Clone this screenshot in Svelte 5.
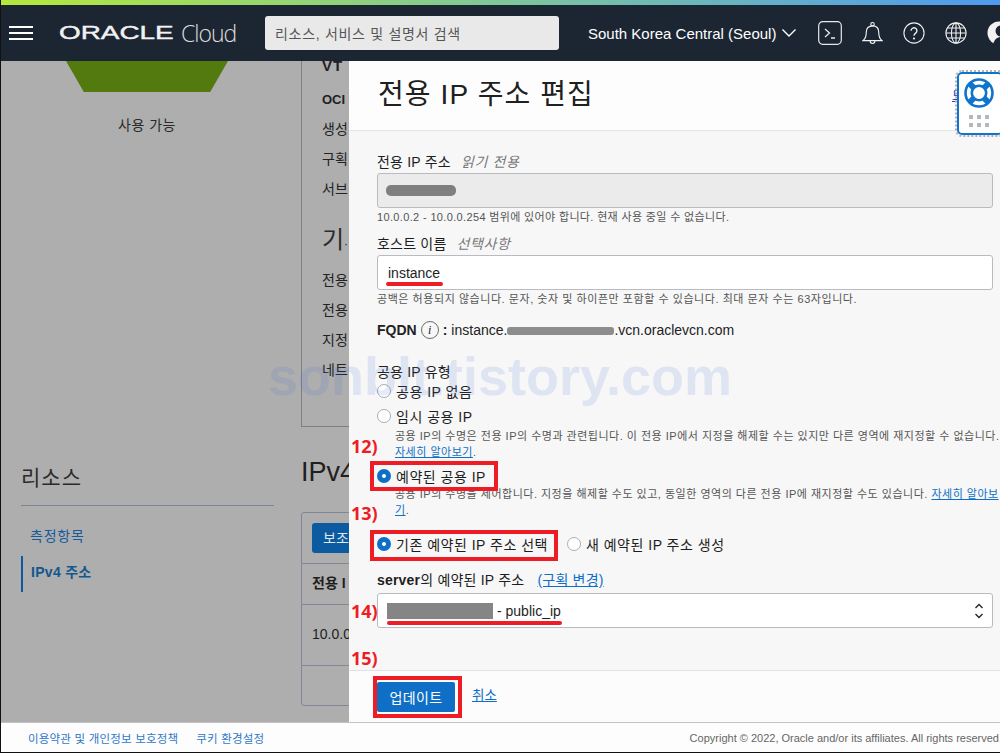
<script>
  const sideLabels = ['전용', '전용', '지정', '네트'];
  const topLabels = ['생성', '구획', '서브'];
</script>

<div class="screen">
  <div class="rainbow"></div>

  <header class="topbar">
    <button class="burger" aria-label="메뉴"><span></span><span></span><span></span></button>
    <div class="logo"><span class="logo-oracle">ORACLE</span><span class="logo-cloud">Cloud</span></div>
    <div class="search">리소스, 서비스 및 설명서 검색</div>
    <div class="region">South Korea Central (Seoul)
      <svg width="16" height="10" viewBox="0 0 16 10"><path d="M1.500 1.500 8 8l6.500-6.500" fill="none" stroke="#fff" stroke-width="1.400" /></svg>
    </div>
    <div class="tools">
      <svg width="24" height="24" viewBox="0 0 24 24" fill="none" stroke="#e8e8e8" stroke-width="1.200">
        <rect x=".7" y=".7" width="22.600" height="22.600" rx="4" />
        <path d="M7 8l4.500 4L7 16M13 17h4" stroke-width="1.300" />
      </svg>
      <svg width="21" height="24" viewBox="0 0 22 24" fill="none" stroke="#f0f0f0" stroke-width="1.200">
        <path d="M1 20c3-2 3.500-5 3.500-9 0-4 2.500-6.500 6.500-6.500S17.500 7 17.500 11c0 4 .5 7 3.500 9z" />
        <circle cx="11" cy="2.800" r="1.800" />
        <path d="M8.500 20.500a2.500 2.500 0 0 0 5 0" />
      </svg>
      <svg width="22" height="24" viewBox="0 0 24 24" fill="none" stroke="#f0f0f0" stroke-width="1.200">
        <circle cx="12" cy="12" r="11" />
        <path d="M8.800 9.500a3.200 3.200 0 1 1 5 2.700c-1.200.8-1.800 1.300-1.800 2.800" stroke-width="1.500" />
        <circle cx="12" cy="18" r=".6" fill="#f0f0f0" />
      </svg>
      <svg width="22" height="24" viewBox="0 0 24 24" fill="none" stroke="#f0f0f0" stroke-width="1.200">
        <circle cx="12" cy="12" r="11" />
        <ellipse cx="12" cy="12" rx="5" ry="11" />
        <path d="M12 1v22M1 12h22M2.500 6.500h19M2.500 17.500h19" />
      </svg>
      <svg width="24" height="24" viewBox="0 0 24 24">
        <circle cx="12" cy="12" r="11.500" fill="#f2f2f2" />
        <circle cx="14" cy="10" r="5.500" fill="#1c2633" />
        <path d="M6 24c1-6 5-8 8-8s7 2 8 8z" fill="#1c2633" />
      </svg>
    </div>
  </header>

  <div class="workspace">
    <div class="page">
      <aside class="side">
        <div class="status">
          <div class="hexagon"></div>
          <div class="status-text">사용 가능</div>
        </div>
        <div class="resources">
          <h2>리소스</h2>
          <nav>
            <div class="nav-item">측정항목</div>
            <div class="nav-item active">IPv4 주소</div>
          </nav>
        </div>
      </aside>
      <section class="content">
        <div class="info-box">
          <div class="info-title">VT</div>
          <div class="info-row bold">OCI</div>
          {#each topLabels as label}
            <div class="info-row">{label}</div>
          {/each}
          <div class="info-head">기<small>·</small></div>
          {#each sideLabels as label}
            <div class="info-row">{label}</div>
          {/each}
        </div>
        <h2 class="ipv4-title">IPv4</h2>
        <div class="table-box">
          <div class="table-tools"><span class="sub-btn">보조</span></div>
          <div class="table-head">전용 I</div>
          <div class="table-cell">10.0.0</div>
        </div>
      </section>
    </div>

    <div class="panel">
      <div class="panel-head">
        <h1>전용 IP 주소 편집</h1>
        <a href="#help" class="help-link">도</a>
      </div>

      <div class="panel-body">
        <div class="field">
          <div class="label">전용 IP 주소 <em>읽기 전용</em></div>
          <div class="input readonly"><span class="blur-ip"></span></div>
          <div class="hint">10.0.0.2 - 10.0.0.254 범위에 있어야 합니다. 현재 사용 중일 수 없습니다.</div>
        </div>

        <div class="field host">
          <div class="label">호스트 이름 <em>선택사항</em></div>
          <div class="input">instance</div>
          <div class="hint">공백은 허용되지 않습니다. 문자, 숫자 및 하이픈만 포함할 수 있습니다. 최대 문자 수는 63자입니다.</div>
        </div>

        <div class="fqdn">
          <b>FQDN</b>
          <span class="info-icon">i</span>
          <b>:</b>
          <span>instance.<span class="smudge"></span>.vcn.oraclevcn.com</span>
        </div>

        <div class="label type-label">공용 IP 유형</div>
        <div class="radio first"><span class="dot"></span>공용 IP 없음</div>
        <div class="radio second"><span class="dot"></span>임시 공용 IP</div>
        <div class="desc">공용 IP의 수명은 전용 IP의 수명과 관련됩니다. 이 전용 IP에서 지정을 해제할 수는 있지만 다른 영역에 재지정할 수 없습니다. <a href="#more">자세히 알아보기</a>.</div>
        <div class="radio third"><span class="dot on"></span>예약된 공용 IP</div>
        <div class="desc second-desc">공용 IP의 수명을 제어합니다. 지정을 해제할 수도 있고, 동일한 영역의 다른 전용 IP에 재지정할 수도 있습니다. <a href="#more">자세히 알아보기</a>.</div>
        <div class="radio-row">
          <div class="radio"><span class="dot on"></span>기존 예약된 IP 주소 선택</div>
          <div class="radio"><span class="dot"></span>새 예약된 IP 주소 생성</div>
        </div>

        <div class="label select-label"><b>server</b>의 예약된 IP 주소 <a href="#compartment">(구획 변경)</a></div>
        <div class="input select">
          <span class="mask"></span><span>- public_ip</span>
          <svg width="10" height="18" viewBox="0 0 10 18" fill="none" stroke="#222" stroke-width="1.300">
            <path d="M1.500 6 5 2.500 8.500 6M1.500 12 5 15.500 8.500 12" />
          </svg>
        </div>
      </div>

      <div class="panel-foot">
        <button class="primary">업데이트</button>
        <a href="#cancel">취소</a>
      </div>
    </div>

    <!-- 도움말 위젯 -->
    <div class="helper">
      <svg width="30" height="30" viewBox="0 0 30 30" fill="none" stroke="#0f74cc">
        <circle cx="15" cy="15" r="13.500" stroke-width="2.600" />
        <circle cx="15" cy="15" r="7.200" stroke-width="2.600" />
        <path d="M5.500 5.500l5 5M24.500 5.500l-5 5M5.500 24.500l5-5M24.500 24.500l-5-5" stroke-width="6" />
      </svg>
      <div class="grip">
        {#each Array(6) as _}<i></i>{/each}
      </div>
    </div>
  </div>

  <footer class="bottom">
    <a href="#terms">이용약관 및 개인정보 보호정책</a>
    <a href="#cookie">쿠키 환경설정</a>
    <span class="copy">Copyright © 2022, Oracle and/or its affiliates. All rights reserved.</span>
  </footer>

  <!-- 블로그 캡처에 덧그린 주석과 워터마크 -->
  <div class="watermark">sonblt.tistory.com</div>
  <span class="note n12">12)</span>
  <span class="note n13">13)</span>
  <span class="note n14">14)</span>
  <span class="note n15">15)</span>
  <span class="mark m-radio"></span>
  <span class="mark m-existing"></span>
  <span class="mark m-update"></span>
  <span class="line l-host"></span>
  <span class="line l-ip"></span>
</div>

<style>
  :global(body) {
    margin: 0;
    background: #fff;
  }
  .screen {
    position: relative;
    width: 1000px;
    height: 753px;
    display: flex;
    flex-direction: column;
    overflow: hidden;
    box-sizing: border-box;
    border-left: 1px solid #111;
    border-bottom: 1px solid #111;
    font-family: "Liberation Sans", "Noto Sans CJK KR", sans-serif;
    font-size: 14px;
    color: #1e1e1e;
  }
  a {
    color: #0f6fc6;
  }

  .rainbow {
    height: 5px;
    flex: none;
    background: linear-gradient(90deg, #b5e83c 0%, #7fc79a 50%, #4e9af0 100%);
  }
  .topbar {
    height: 56px;
    flex: none;
    display: flex;
    align-items: center;
    background: #1c2633;
    color: #fff;
  }
  .burger {
    width: 24px;
    height: 14px;
    flex: none;
    margin-left: 8px;
    padding: 0;
    border: 0;
    background: none;
    display: flex;
    flex-direction: column;
    justify-content: space-between;
  }
  .burger span {
    display: block;
    height: 2px;
    background: #fff;
  }
  .logo {
    margin-left: 26px;
    display: flex;
    align-items: center;
    width: 206px;
    flex: none;
    color: #f2f2f2;
    white-space: nowrap;
  }
  .logo-oracle {
    font-size: 18px;
    font-weight: 400;
    display: inline-block;
    width: 122px;
    transform-origin: left center;
    transform: scaleX(1.55);
    -webkit-text-stroke: .4px #f2f2f2;
  }
  .logo-cloud {
    font-size: 23px;
    color: #dcdcdc;
    font-family: "Open Sans", "Liberation Sans", sans-serif;
    font-weight: 300;
    letter-spacing: -1px;
  }
  .search {
    width: 294px;
    height: 34px;
    flex: none;
    box-sizing: border-box;
    padding-left: 10px;
    display: flex;
    align-items: center;
    background: #e9e9e9;
    border-radius: 3px;
    color: #555;
    font-size: 14px;
    letter-spacing: .7px;
  }
  .region {
    margin-left: 29px;
    display: flex;
    align-items: center;
    gap: 5px;
    flex: none;
    font-size: 15px;
    white-space: nowrap;
  }
  .tools {
    margin-left: 21px;
    display: flex;
    align-items: center;
    gap: 20px;
    flex: none;
  }

  .workspace {
    position: relative;
    height: 661px;
    flex: none;
    display: flex;
  }
  .page {
    width: 348px;
    flex: none;
    display: flex;
    background: #aeaeae;
    overflow: hidden;
  }
  .side {
    width: 300px;
    flex: none;
    display: flex;
    flex-direction: column;
  }
  .status {
    height: 400px;
  }
  .hexagon {
    width: 162px;
    height: 31px;
    margin-left: 65px;
    background: #527a0e;
    clip-path: polygon(0 0, 100% 0, 89% 100%, 11% 100%);
  }
  .status-text {
    margin-top: 22px;
    text-align: center;
    width: 292px;
    font-size: 14px;
    color: #2a2a2a;
    letter-spacing: .5px;
  }
  .resources {
    margin: 0 27px 0 20px;
  }
  .resources h2 {
    margin: 0;
    padding-bottom: 14px;
    font-size: 21px;
    font-weight: 400;
    letter-spacing: 1px;
    color: #2b2b2b;
    border-bottom: 1px solid #7b8694;
  }
  nav {
    margin-top: 14px;
  }
  .nav-item {
    height: 36px;
    padding-left: 9px;
    font-size: 14px;
    letter-spacing: .8px;
    color: #155a9a;
    line-height: 32px;
  }
  .nav-item.active {
    font-weight: 700;
    letter-spacing: .3px;
    border-left: 2px solid #0c5aa0;
    padding-left: 8px;
    color: #12578f;
    line-height: 32px;
  }
  .content {
    flex: 1;
    min-width: 0;
    display: flex;
    flex-direction: column;
    overflow: hidden;
  }
  .info-box {
    height: 366px;
    box-sizing: border-box;
    border: 1px solid #7f7f7f;
    border-top: 0;
    border-right: 0;
    padding-left: 20px;
    white-space: nowrap;
    font-size: 14px;
    color: #222;
  }
  .info-title {
    font-size: 15px;
    font-weight: 700;
    line-height: 10px;
    height: 10px;
    letter-spacing: 1px;
  }
  .info-row {
    height: 30px;
    line-height: 30px;
  }
  .info-row.bold {
    font-weight: 700;
    font-size: 13px;
    margin-top: 14px;
    height: 29px;
  }
  .info-head {
    height: 46px;
    margin-top: 15px;
    font-size: 24px;
    line-height: 42px;
    color: #2b2b2b;
  }
  .info-head small {
    font-size: 12px;
  }
  .ipv4-title {
    margin: 30px 0 0;
    font-size: 27px;
    font-weight: 400;
    color: #1f1f1f;
    line-height: 30px;
  }
  .table-box {
    margin-top: 25px;
    width: 80px;
    height: 194px;
    box-sizing: border-box;
    border: 1px solid #7f8894;
    border-radius: 3px;
  }
  .table-tools {
    height: 51px;
    box-sizing: border-box;
    padding: 10px;
    border-bottom: 1px solid #7f8894;
  }
  .sub-btn {
    display: block;
    width: 60px;
    height: 30px;
    line-height: 30px;
    background: #0c5aa0;
    border-radius: 3px;
    color: #dfe7ef;
    padding-left: 11px;
    box-sizing: border-box;
    white-space: nowrap;
  }
  .table-head {
    height: 41px;
    box-sizing: border-box;
    line-height: 38px;
    padding-left: 10px;
    font-weight: 700;
    white-space: nowrap;
    border-bottom: 1px solid #7f8894;
  }
  .table-cell {
    height: 61px;
    box-sizing: border-box;
    line-height: 58px;
    padding-left: 10px;
    white-space: nowrap;
    border-bottom: 1px solid #7f8894;
  }

  .panel {
    flex: 1;
    min-width: 0;
    display: flex;
    flex-direction: column;
    background: #f7f7f7;
    overflow: hidden;
  }
  .panel-head {
    height: 70px;
    flex: none;
    box-sizing: border-box;
    padding: 18px 0 0 29px;
    background: #fdfdfd;
    border-bottom: 1px solid #e4e4e4;
    position: relative;
  }
  .panel-head h1 {
    margin: 0;
    font-size: 28px;
    font-weight: 400;
    line-height: 32px;
    letter-spacing: 1.100px;
    color: #202020;
  }
  .help-link {
    position: absolute;
    right: 36px;
    top: 24px;
    font-size: 13px;
    color: #3a3ab8;
  }
  .panel-body {
    flex: 1;
    min-height: 0;
    padding: 22px 7px 0 28px;
  }
  .label {
    font-size: 14px;
    line-height: 18px;
    height: 18px;
    color: #1e1e1e;
    letter-spacing: .2px;
    white-space: nowrap;
  }
  .label em {
    color: #777;
    margin-left: 6px;
    letter-spacing: .6px;
  }
  .input {
    height: 35px;
    margin-top: 2px;
    box-sizing: border-box;
    border: 1px solid #b8bcc2;
    border-radius: 3px;
    background: #fff;
    padding-left: 10px;
    display: flex;
    align-items: center;
    font-size: 14px;
  }
  .input.readonly {
    background: #ebebeb;
    padding-left: 8px;
  }
  .blur-ip {
    width: 70px;
    height: 11px;
    border-radius: 5px;
    background: #7f7f7f;
  }
  .hint {
    margin-top: 2px;
    height: 14px;
    font-size: 11px;
    line-height: 14px;
    color: #555;
    letter-spacing: .35px;
    white-space: nowrap;
  }
  .field.host {
    margin-top: 11px;
  }
  .field.host .hint {
    letter-spacing: .55px;
  }
  .fqdn {
    margin-top: 12px;
    height: 24px;
    display: flex;
    align-items: center;
    gap: 4px;
    font-size: 14px;
    white-space: nowrap;
    color: #222;
  }
  .info-icon {
    width: 18px;
    height: 18px;
    box-sizing: border-box;
    border: 1px solid #6b6b6b;
    border-radius: 50%;
    display: inline-flex;
    align-items: center;
    justify-content: center;
    font: italic 12px "Liberation Serif", serif;
  }
  .smudge {
    display: inline-block;
    width: 107px;
    height: 8px;
    background: #8d8d8d;
    border-radius: 3px;
  }
  .type-label {
    margin-top: 21px;
  }
  .radio {
    display: flex;
    align-items: center;
    gap: 5px;
    height: 18px;
    font-size: 14px;
    color: #1e1e1e;
    white-space: nowrap;
    letter-spacing: .5px;
  }
  .radio.first {
    margin-top: 1px;
  }
  .radio.second {
    margin-top: 7px;
  }
  .radio.third {
    margin-top: 7px;
  }
  .dot {
    width: 14px;
    height: 14px;
    flex: none;
    box-sizing: border-box;
    border: 1px solid #a9aeb5;
    border-radius: 50%;
    background: #fff;
  }
  .dot.on {
    border: 5px solid #0f6fc6;
    background: #fff;
  }
  .desc {
    margin: 3px 0 0 18px;
    width: 607px;
    height: 32px;
    font-size: 11px;
    line-height: 16px;
    color: #555;
    letter-spacing: .5px;
    word-break: break-all;
  }
  .desc.second-desc {
    margin-top: 1px;
  }
  .radio-row {
    display: flex;
    gap: 19px;
    margin-top: 17px;
  }
  .select-label {
    margin-top: 18px;
  }
  .select-label a {
    margin-left: 9px;
  }
  .select {
    margin-top: 4px;
    gap: 4px;
    position: relative;
    padding-left: 9px;
  }
  .mask {
    width: 106px;
    height: 16px;
    background: #858585;
  }
  .select svg {
    position: absolute;
    right: 8px;
    top: 8px;
  }
  .panel-foot {
    height: 52px;
    flex: none;
    box-sizing: border-box;
    padding: 11px 0 0 28px;
    display: flex;
    align-items: flex-start;
    gap: 17px;
    background: #fcfcfc;
    border-top: 1px solid #e2e2e2;
  }
  .primary {
    width: 78px;
    height: 30px;
    padding: 0;
    border: 0;
    border-radius: 2px;
    background: #0f6fc6;
    color: #fff;
    font: inherit;
    font-size: 14px;
    letter-spacing: .4px;
    box-shadow: 0 0 0 1px #fff;
  }
  .panel-foot a {
    line-height: 28px;
    font-size: 13.500px;
  }
  .helper {
    position: absolute;
    right: -3px;
    top: 11px;
    width: 46px;
    height: 63px;
    box-sizing: border-box;
    padding: 4px 0 0 5px;
    background: #fff;
    border: 2px solid #0f74cc;
    border-radius: 5px;
    outline: 2px dotted #b0b0b0;
  }
  .helper svg {
    display: block;
  }
  .grip {
    margin: 7px 0 0 5px;
    display: grid;
    grid-template-columns: repeat(3, 4px);
    gap: 4px;
  }
  .grip i {
    height: 4px;
    background: #b4b8bd;
  }

  .bottom {
    flex: 1;
    display: flex;
    align-items: center;
    padding-left: 27px;
    gap: 18px;
    background: #fdfdfd;
    border-top: 1px solid #c2c2c2;
    font-size: 11.500px;
    letter-spacing: .2px;
    white-space: nowrap;
  }
  .bottom a {
    text-decoration: none;
    color: #2f78c8;
  }
  .copy {
    margin-left: auto;
    color: #666;
    flex: none;
    margin-right: -2px;
    font-size: 11px;
    letter-spacing: 0;
  }

  .watermark {
    position: absolute;
    left: 267px;
    top: 345px;
    font-family: "Liberation Sans", sans-serif;
    font-size: 54px;
    font-weight: 700;
    color: rgba(70, 110, 210, .14);
    white-space: nowrap;
    pointer-events: none;
  }
  .note {
    position: absolute;
    left: 350px;
    color: #ee1c25;
    font-family: "Noto Sans", sans-serif;
    font-size: 18px;
    font-weight: 700;
    line-height: 20px;
  }
  .n12 { top: 436px; }
  .n13 { top: 503px; }
  .n14 { top: 601px; }
  .n15 { top: 648px; }
  .mark {
    position: absolute;
    box-sizing: border-box;
    border: 4px solid #ee1c25;
  }
  .m-radio {
    left: 369px;
    top: 461px;
    width: 128px;
    height: 30px;
  }
  .m-existing {
    left: 369px;
    top: 530px;
    width: 188px;
    height: 31px;
  }
  .m-update {
    left: 372px;
    top: 676px;
    width: 89px;
    height: 42px;
  }
  .line {
    position: absolute;
    height: 4px;
    border-radius: 2px;
    background: #ee1c25;
  }
  .l-host {
    left: 385px;
    top: 282px;
    width: 57px;
  }
  .l-ip {
    left: 386px;
    top: 621px;
    width: 175px;
  }
</style>
